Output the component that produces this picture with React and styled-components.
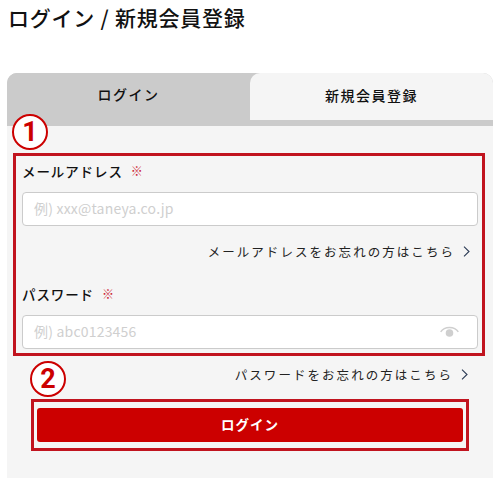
import React from 'react';
import styled, { createGlobalStyle } from 'styled-components';

const GlobalStyle = createGlobalStyle`
    html, body {
        margin: 0;
        background: #fff;
    }
    body {
        font-family: "Noto Sans CJK JP", "Liberation Sans", sans-serif;
        color: #111;
    }
    * { box-sizing: border-box; }
`;

const Page = styled.div`
    width: 500px;
    height: 490px;
    padding: 0 7px;
    overflow: hidden;
`;

const Title = styled.h1`
    margin: 0;
    padding: 3px 0 0 1px;
    height: 73px;
    font-size: 21px;
    line-height: 28px;
    font-weight: 500;
    letter-spacing: 0.75px;
`;

const Tabs = styled.div`
    display: grid;
    grid-template-columns: 243px 243px;
    height: 53px;
    background: #cbcbcb;
    border-radius: 10px 10px 0 0;
`;

const Tab = styled.div`
    display: flex;
    align-items: center;
    justify-content: center;
    height: ${(p) => (p.$active ? '53px' : '47px')};
    padding-bottom: ${(p) => (p.$active ? '11px' : '3px')};
    font-size: 14px;
    font-weight: 500;
    letter-spacing: 1.5px;
    background: ${(p) => (p.$active ? '#cbcbcb' : '#f5f5f5')};
    border-radius: 10px 10px 0 0;
`;

const Panel = styled.div`
    position: relative;
    height: 352px;
    padding: 27px 8px 0 6px;
    background: #f5f5f5;
`;

const Marker = styled.div`
    position: absolute;
    left: ${(p) => p.$left}px;
    top: ${(p) => p.$top}px;
    width: 36px;
    height: 36px;
    display: flex;
    align-items: center;
    justify-content: center;
    border: 2px solid #cc0000;
    border-radius: 50%;
    background: #fff;
    color: #cc0000;
    font-family: Roboto, sans-serif;
    font-size: 27px;
    line-height: 1;
    font-weight: 700;
`;

const FieldFrame = styled.div`
    height: 203px;
    padding: 4px 4px 0 6px;
    border: 3px solid #c1141f;
`;

const Label = styled.div`
    display: flex;
    align-items: center;
    height: 21px;
    margin-top: ${(p) => p.$top || 0}px;
    font-size: 13.5px;
    font-weight: 500;
    letter-spacing: 0.9px;
`;

const Required = styled.span`
    margin-left: 8px;
    font-size: 12px;
    font-weight: 700;
    color: #cc2233;
`;

const InputBox = styled.div`
    display: flex;
    align-items: center;
    justify-content: space-between;
    height: 34px;
    margin-top: 11px;
    padding: 0 18px 2px 11px;
    background: #fff;
    border: 1px solid #cbcbcb;
    border-radius: 4px;
`;

const Placeholder = styled.span`
    font-size: 14px;
    letter-spacing: 0.2px;
    color: #cfcfcf;
    font-weight: 400;
`;

const ForgotLink = styled.a`
    display: flex;
    align-items: center;
    justify-content: flex-end;
    height: ${(p) => p.$height}px;
    padding-right: ${(p) => p.$right}px;
    padding-bottom: ${(p) => p.$bottom || 0}px;
    gap: 8px;
    font-size: 12.5px;
    letter-spacing: 2.05px;
    color: #222;
`;

const ButtonFrame = styled.div`
    width: 438px;
    height: 52px;
    margin-left: 18px;
    padding: 6px 3px;
    border: 3px solid #c1141f;
`;

const LoginButton = styled.button`
    display: block;
    width: 100%;
    height: 34px;
    padding: 0 0 2px;
    border: none;
    border-radius: 3px;
    background: #cc0000;
    color: #fff;
    font-family: inherit;
    font-size: 13.5px;
    font-weight: 700;
    letter-spacing: 1px;
`;

const Chevron = () => (
    <svg width="7" height="11" viewBox="0 0 7 11" fill="none" stroke="#2b3a55" strokeWidth="1.1">
        <path d="M1 0.7 L6 5.5 L1 10.3" />
    </svg>
);

const Eye = () => (
    <svg width="19" height="11" viewBox="0 0 19 11">
        <path d="M0.7 5.8 C4.5 0 14.5 0 18.3 5.8" fill="none" stroke="#cfcfcf" strokeWidth="1.5" />
        <circle cx="9.5" cy="7" r="3.8" fill="#cfcfcf" />
    </svg>
);

export default function App() {
    return (
        <Page>
            <GlobalStyle />
            <Title>ログイン / 新規会員登録</Title>
            <Tabs>
                <Tab $active>ログイン</Tab>
                <Tab>新規会員登録</Tab>
            </Tabs>
            <Panel>
                <Marker $left={5} $top={-12}>1</Marker>
                <FieldFrame>
                    <Label>メールアドレス<Required>※</Required></Label>
                    <InputBox>
                        <Placeholder>例) xxx@taneya.co.jp</Placeholder>
                    </InputBox>
                    <ForgotLink $height={51} $right={8}>メールアドレスをお忘れの方はこちら<Chevron /></ForgotLink>
                    <Label $top={6}>パスワード<Required>※</Required></Label>
                    <InputBox>
                        <Placeholder>例) abc0123456</Placeholder>
                        <Eye />
                    </InputBox>
                </FieldFrame>
                <ForgotLink $height={43} $right={17} $bottom={7}>パスワードをお忘れの方はこちら<Chevron /></ForgotLink>
                <ButtonFrame>
                    <LoginButton>ログイン</LoginButton>
                </ButtonFrame>
                <Marker $left={23} $top={235}>2</Marker>
            </Panel>
        </Page>
    );
}
